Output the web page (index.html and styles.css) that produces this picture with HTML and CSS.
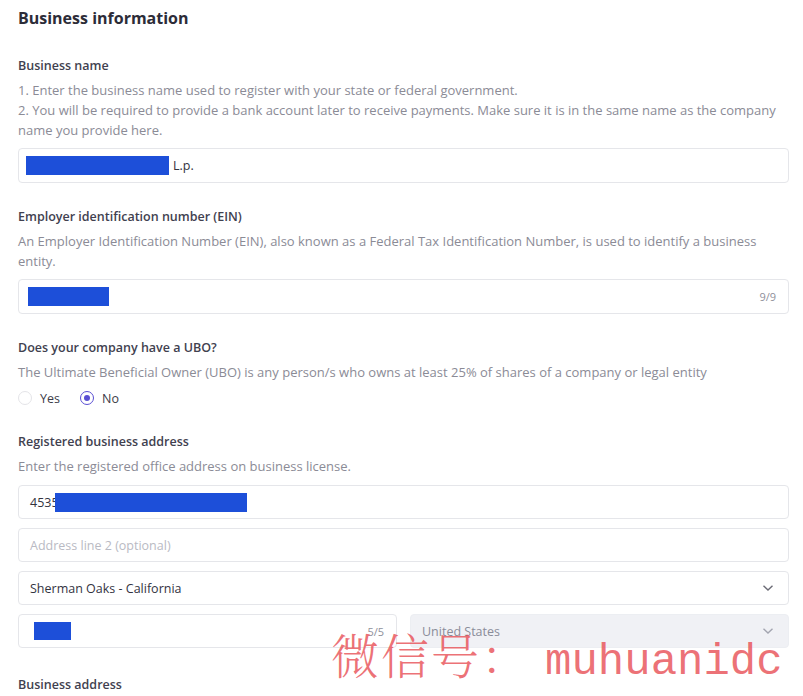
FILE: index.html
```html
<!DOCTYPE html>
<html>
<head>
<meta charset="utf-8">
<link rel="stylesheet" href="styles.css">
</head>
<body>
<div class="page">
  <h1 class="title">Business information</h1>

  <section class="field">
    <div class="label">Business name</div>
    <div class="help">1. Enter the business name used to register with your state or federal government.<br>2. You will be required to provide a bank account later to receive payments. Make sure it is in the same name as the company name you provide here.</div>
    <div class="input"><span class="redact r1"></span><span class="val">L.p.</span></div>
  </section>

  <section class="field">
    <div class="label">Employer identification number (EIN)</div>
    <div class="help">An Employer Identification Number (EIN), also known as a Federal Tax Identification Number, is used to identify a business entity.</div>
    <div class="input"><span class="redact r2"></span><span class="count">9/9</span></div>
  </section>

  <section class="field">
    <div class="label">Does your company have a UBO?</div>
    <div class="help">The Ultimate Beneficial Owner (UBO) is any person/s who owns at least 25% of shares of a company or legal entity</div>
    <div class="radios">
      <label class="radio"><span class="dot"></span>Yes</label>
      <label class="radio on"><span class="dot"></span>No</label>
    </div>
  </section>

  <section class="field">
    <div class="label">Registered business address</div>
    <div class="help">Enter the registered office address on business license.</div>
    <div class="stack">
      <div class="input"><span class="val">4535</span><span class="redact r3"></span></div>
      <div class="input"><span class="ph">Address line 2 (optional)</span></div>
      <div class="input select"><span class="val">Sherman Oaks - California</span><svg class="chev" width="12" height="8" viewBox="0 0 12 8"><path d="M1.5 1.8 L6 6 L10.5 1.8" fill="none" stroke="#6b6b75" stroke-width="1.4"/></svg></div>
      <div class="row">
        <div class="input"><span class="redact r4"></span><span class="count">5/5</span></div>
        <div class="input select disabled"><span class="val">United States</span><svg class="chev" width="12" height="8" viewBox="0 0 12 8"><path d="M1.5 1.8 L6 6 L10.5 1.8" fill="none" stroke="#a3a5b0" stroke-width="1.4"/></svg></div>
      </div>
    </div>
  </section>

  <section class="field">
    <div class="label">Business address</div>
  </section>
</div>
<div class="watermark"><span class="cjk">微信号：</span><span class="latin">muhuanidc</span></div>
</body>
</html>
```

FILE: styles.css
```css
html, body {
  margin: 0;
  padding: 0;
  background: #fff;
}
body {
  font-family: "Open Sans", Lato, Arial, sans-serif;
  color: #3b3b48;
  position: relative;
  height: 696px;
  overflow: hidden;
}
.page {
  padding: 8px 14px 0 18px;
  display: flex;
  flex-direction: column;
}
.title {
  margin: 0 0 28px;
  font-size: 16px;
  line-height: 20px;
  font-weight: 700;
  color: #2c2c38;
}
.field {
  display: flex;
  flex-direction: column;
  margin-bottom: 24px;
}
.label {
  font-size: 12.5px;
  line-height: 20px;
  font-weight: 600;
  color: #41414f;
  margin-bottom: 4px;
}
.help {
  font-size: 13px;
  line-height: 20px;
  color: #8b8b96;
  margin-bottom: 8px;
}
.input {
  height: 35px;
  box-sizing: border-box;
  border: 1px solid #e5e6ea;
  border-radius: 4px;
  display: flex;
  align-items: center;
  padding: 0 12px 0 11px;
  font-size: 12.5px;
  color: #33333f;
  background: #fff;
}
.val { white-space: nowrap; }
.ph { color: #b9bac3; }
.count {
  margin-left: auto;
  font-size: 11px;
  color: #8f909a;
}
.redact {
  display: inline-block;
  background: #1d4fd9;
  height: 19px;
}
.r1 { width: 143px; margin-left: -4px; margin-right: 4px; }
.r2 { width: 81px; margin-left: -2px; }
.r3 { width: 192px; margin-left: -4px; }
.r4 { width: 37px; margin-left: 4px; height: 18px; }
.radios {
  display: flex;
  gap: 20px;
  height: 20px;
  align-items: center;
  margin-top: -2px;
}
.radio {
  display: flex;
  align-items: center;
  gap: 8px;
  font-size: 12.5px;
  color: #3b3b48;
}
.dot {
  width: 14px;
  height: 14px;
  box-sizing: border-box;
  border-radius: 50%;
  border: 1px solid #e4e4e8;
  background: #fff;
  display: inline-block;
  position: relative;
}
.radio.on .dot {
  border: 1.5px solid #5a4fd3;
}
.radio.on .dot::after {
  content: "";
  position: absolute;
  left: 50%;
  top: 50%;
  width: 6px;
  height: 6px;
  margin: -3px 0 0 -3px;
  border-radius: 50%;
  background: #5a4fd3;
}
.stack {
  display: flex;
  flex-direction: column;
  gap: 9px;
  margin-top: 1px;
  margin-bottom: 3px;
}
.stack .input { height: 34px; }
.select .chev { margin-left: auto; margin-right: 2px; }
.row {
  display: grid;
  grid-template-columns: 1fr 1fr;
  gap: 13px;
}
.disabled {
  background: #f0f1f5;
  border-color: #eceef2;
}
.disabled .val { color: #8a8c99; }
.watermark {
  position: absolute;
  left: 331px;
  top: 624px;
  display: flex;
  align-items: baseline;
  color: rgba(232, 82, 88, 0.82);
  pointer-events: none;
  white-space: nowrap;
}
.watermark .cjk {
  font-family: "Noto Serif CJK SC", "Noto Sans CJK SC", serif;
  font-weight: 300;
  font-size: 48px;
  line-height: 60px;
  letter-spacing: 2px;
}
.watermark .latin {
  font-family: "Liberation Mono", "DejaVu Sans Mono", monospace;
  font-size: 44px;
  line-height: 60px;
  margin-left: 14px;
}
```
